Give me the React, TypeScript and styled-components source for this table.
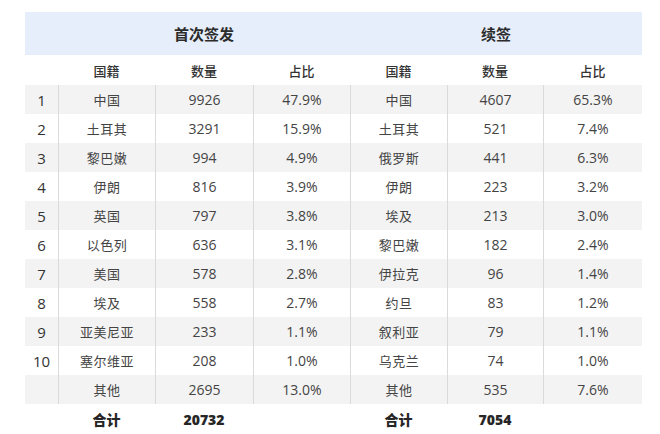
import styled, { createGlobalStyle } from 'styled-components';

const GlobalStyle = createGlobalStyle`
  html, body {
    margin: 0;
    padding: 0;
    background: #ffffff;
  }
  body {
    font-family: 'Open Sans', 'Noto Sans CJK SC', sans-serif;
    color: #3a3a3a;
  }
`;

const COLS = '33px 97px 98px 97px 97px 96px 99px';

const Page = styled.div`
  width: 660px;
  height: 434px;
  padding: 12px 0 0 25px;
  box-sizing: border-box;
  overflow: hidden;
`;

const Table = styled.div`
  width: 617px;
  display: flex;
  flex-direction: column;
`;

const GroupBand = styled.div`
  display: grid;
  grid-template-columns: 33px 292px 292px;
  height: 43px;
  background: #e7eefb;
`;

const GroupTitle = styled.div`
  display: flex;
  align-items: center;
  justify-content: center;
  font-family: 'Noto Sans CJK SC', sans-serif;
  font-size: 15px;
  font-weight: 700;
  color: #2c2c2c;
`;

const Row = styled.div<{ $h: number; $striped?: boolean }>`
  display: grid;
  grid-template-columns: ${COLS};
  height: ${p => p.$h}px;
  background: ${p => (p.$striped ? '#f3f3f3' : '#ffffff')};
`;

const HeadCell = styled.div`
  display: flex;
  align-items: center;
  justify-content: center;
  font-family: 'Noto Sans CJK SC', sans-serif;
  font-size: 13px;
  font-weight: 500;
  color: #333333;
`;

const Cell = styled.div<{ $first?: boolean }>`
  display: flex;
  align-items: center;
  justify-content: center;
  font-size: 14px;
  color: #444444;
  border-left: ${p => (p.$first ? 'none' : '1px solid #dadada')};
`;

const Rank = styled(Cell)`
  font-size: 15px;
  color: #333333;
`;

const Name = styled(Cell)`
  font-family: 'Noto Sans CJK SC', sans-serif;
  font-size: 13px;
  font-weight: 400;
  letter-spacing: 0.5px;
`;

const TotalCell = styled.div<{ $cjk?: boolean }>`
  display: flex;
  align-items: center;
  justify-content: center;
  font-family: ${p => (p.$cjk ? "'Noto Sans CJK SC', sans-serif" : "'Open Sans', sans-serif")};
  font-size: 14px;
  font-weight: 800;
  color: #262626;
`;

type Item = { name: string; count: string; pct: string };

const first: Item[] = [
  { name: '中国', count: '9926', pct: '47.9%' },
  { name: '土耳其', count: '3291', pct: '15.9%' },
  { name: '黎巴嫩', count: '994', pct: '4.9%' },
  { name: '伊朗', count: '816', pct: '3.9%' },
  { name: '英国', count: '797', pct: '3.8%' },
  { name: '以色列', count: '636', pct: '3.1%' },
  { name: '美国', count: '578', pct: '2.8%' },
  { name: '埃及', count: '558', pct: '2.7%' },
  { name: '亚美尼亚', count: '233', pct: '1.1%' },
  { name: '塞尔维亚', count: '208', pct: '1.0%' },
  { name: '其他', count: '2695', pct: '13.0%' },
];

const renewal: Item[] = [
  { name: '中国', count: '4607', pct: '65.3%' },
  { name: '土耳其', count: '521', pct: '7.4%' },
  { name: '俄罗斯', count: '441', pct: '6.3%' },
  { name: '伊朗', count: '223', pct: '3.2%' },
  { name: '埃及', count: '213', pct: '3.0%' },
  { name: '黎巴嫩', count: '182', pct: '2.4%' },
  { name: '伊拉克', count: '96', pct: '1.4%' },
  { name: '约旦', count: '83', pct: '1.2%' },
  { name: '叙利亚', count: '79', pct: '1.1%' },
  { name: '乌克兰', count: '74', pct: '1.0%' },
  { name: '其他', count: '535', pct: '7.6%' },
];

export default function App() {
  return (
    <Page>
      <GlobalStyle />
      <Table>
        <GroupBand>
          <div />
          <GroupTitle>首次签发</GroupTitle>
          <GroupTitle>续签</GroupTitle>
        </GroupBand>
        <Row $h={30}>
          <div />
          <HeadCell>国籍</HeadCell>
          <HeadCell>数量</HeadCell>
          <HeadCell>占比</HeadCell>
          <HeadCell>国籍</HeadCell>
          <HeadCell>数量</HeadCell>
          <HeadCell>占比</HeadCell>
        </Row>
        {first.map((a, i) => {
          const b = renewal[i];
          return (
            <Row key={i} $h={29} $striped={i % 2 === 0}>
              <Rank $first>{i < 10 ? i + 1 : ''}</Rank>
              <Name>{a.name}</Name>
              <Cell>{a.count}</Cell>
              <Cell>{a.pct}</Cell>
              <Name>{b.name}</Name>
              <Cell>{b.count}</Cell>
              <Cell>{b.pct}</Cell>
            </Row>
          );
        })}
        <Row $h={30}>
          <div />
          <TotalCell $cjk>合计</TotalCell>
          <TotalCell>20732</TotalCell>
          <div />
          <TotalCell $cjk>合计</TotalCell>
          <TotalCell>7054</TotalCell>
          <div />
        </Row>
      </Table>
    </Page>
  );
}
